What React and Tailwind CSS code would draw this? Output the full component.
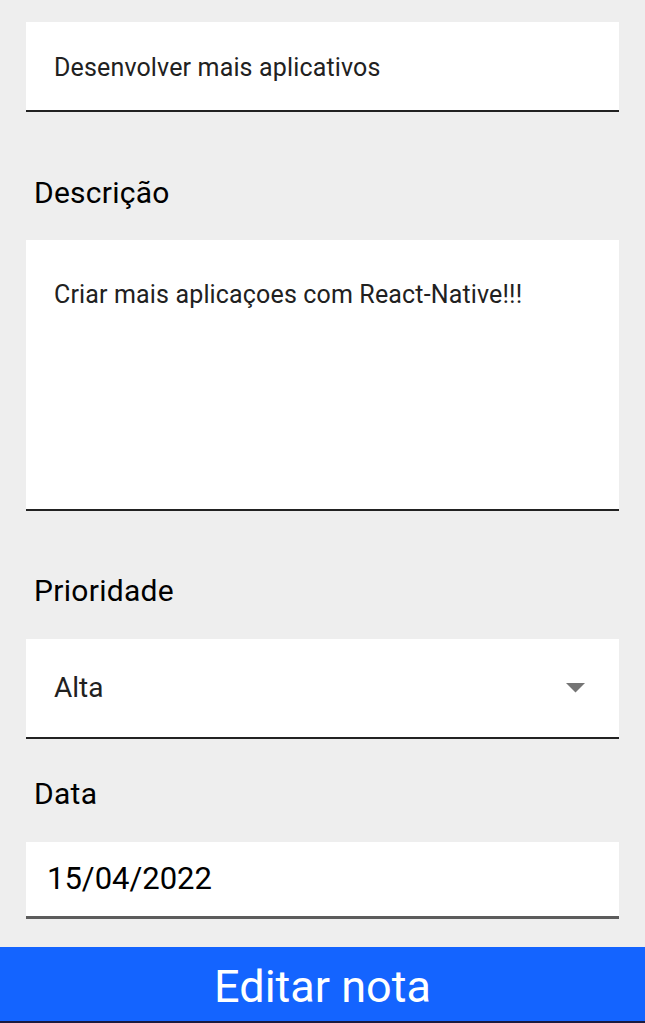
export default function App() {
  return (
    <div className="w-[645px] h-[1023px] bg-[#eeeeee] flex flex-col overflow-hidden" style={{ fontFamily: "Roboto, 'Liberation Sans', sans-serif" }}>
      <div className="flex-1 flex flex-col px-[26px] pt-[22px]">
        <div className="h-[90px] bg-white border-b-2 border-[#222222] flex items-center pl-[28px] pt-[3px]">
          <span className="text-[25px] leading-[30px] tracking-[0.15px] text-[#212121]">Desenvolver mais aplicativos</span>
        </div>
        <div className="mt-[63px] h-[36px] pl-[8px]">
          <span className="text-[30px] leading-[36px] tracking-[0.25px] text-black">Descrição</span>
        </div>
        <div className="mt-[29px] h-[271px] bg-white border-b-2 border-[#222222] pl-[28px] pt-[40px]">
          <span className="text-[25px] leading-[30px] tracking-[0.15px] text-[#212121]">Criar mais aplicaçoes com React-Native!!!</span>
        </div>
        <div className="mt-[62px] h-[36px] pl-[8px]">
          <span className="text-[30px] leading-[36px] tracking-[0.3px] text-black">Prioridade</span>
        </div>
        <div className="mt-[30px] h-[100px] bg-white border-b-2 border-[#222222] flex items-center justify-between pl-[28px] pr-[34px]">
          <span className="text-[28px] leading-[34px] text-[#212121]">Alta</span>
          <svg width="19" height="10" viewBox="0 0 19 10" className="mb-[1px]"><path d="M0 0 L19 0 L9.5 9.5 Z" fill="#757575" /></svg>
        </div>
        <div className="mt-[37px] h-[36px] pl-[8px]">
          <span className="text-[30px] leading-[36px] tracking-[0.3px] text-black">Data</span>
        </div>
        <div className="mt-[30px] h-[77px] bg-white border-b-[3px] border-[#5c5c5c] flex items-center pl-[21px]">
          <span className="text-[31px] leading-[36px] text-black">15/04/2022</span>
        </div>
      </div>
      <button className="h-[76px] shrink-0 bg-[#1464ff] border-b-2 border-[#1a1a40] flex items-center justify-center pt-[5px]">
        <span className="text-[45px] leading-[52px] text-white">Editar nota</span>
      </button>
    </div>
  );
}
